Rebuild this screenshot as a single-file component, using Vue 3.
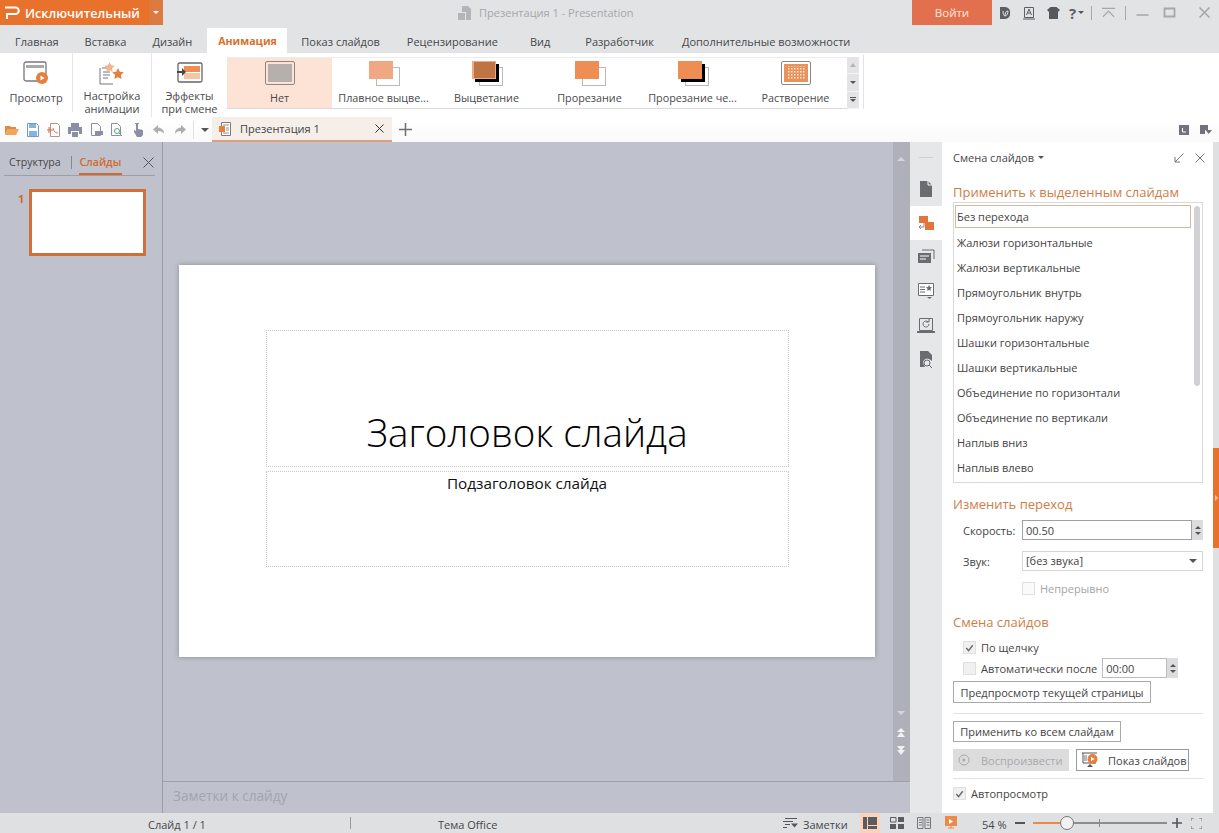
<template>
  <div class="app">
    <!-- шапка -->
    <header class="top">
      <div class="title-row">
        <div class="logo-btn">
          <svg width="16" height="14" viewBox="0 0 16 14"><path d="M1 1.500h10.500a3 3 0 0 1 0 6.500H3v5" fill="none" stroke="#fff" stroke-width="2"/></svg>
          <span>Исключительный</span>
        </div>
        <div class="logo-drop"><i class="tri white"></i></div>
        <div class="doc-title">
          <svg width="15" height="14" viewBox="0 0 15 14"><path d="M5 0h6l3 3v11H9V6H5zM1 7h7v7H1z" fill="#b4b5b8"/></svg>
          <span>Презентация 1 - Presentation</span>
        </div>
        <div class="login">Войти</div>
        <div class="win-icons">
          <svg class="w12" viewBox="0 0 12 14"><path d="M1 1h5a5 5 0 0 1 5 6 5 5 0 0 1-5 6H1z" fill="#5d5d62"/><path d="M4 5c0 3 1 5 2 5 2 0 3-3 3-5-2 0-3 2-3 5" fill="none" stroke="#e2e3e5"/></svg>
          <svg class="w12" viewBox="0 0 12 14"><path d="M1.500 1.500h9v10h-9z" fill="#e2e3e5" stroke="#5d5d62"/><path d="M0 13h12" stroke="#5d5d62"/><path d="M3.500 9L6 3l2.500 6M4.500 7h3" fill="none" stroke="#5d5d62"/></svg>
          <svg class="w13" viewBox="0 0 13 12"><path d="M3.500 0h6L13 3l-2 2v7H2V5L0 3z" fill="#57575c"/></svg>
          <span class="help">?</span><i class="tri dark small"></i>
          <b class="vsep"></b>
          <svg class="ctl collapse" viewBox="0 0 14 11"><path d="M0 1h14M1 10l6-6 6 6" fill="none" stroke="#a7a8ab" stroke-width="1.400"/></svg>
          <b class="vsep sep2"></b>
          <svg class="ctl minb" viewBox="0 0 12 11"><path d="M0 8h12" stroke="#a7a8ab" stroke-width="1.600"/></svg>
          <svg class="ctl maxb" viewBox="0 0 12 11"><path d="M1 1.500h10v8H1z" fill="none" stroke="#a7a8ab" stroke-width="1.800"/></svg>
          <svg class="ctl closeb" viewBox="0 0 11 11"><path d="M.5.500l10 10M10.500.500l-10 10" stroke="#a7a8ab" stroke-width="1.600"/></svg>
        </div>
      </div>
      <nav class="tabs">
        <span v-for="t in tabs" :key="t" class="tab" :class="{ active: t === 'Анимация' }">{{ t }}</span>
      </nav>
    </header>

    <!-- лента -->
    <section class="ribbon">
      <div class="big-btn b1">
        <svg width="26" height="24" viewBox="0 0 26 24">
          <rect x="1" y="1" width="22" height="19" rx="2" fill="#fff" stroke="#77777d" stroke-width="1.300"/>
          <rect x="3" y="4" width="18" height="3" fill="#a8a8ad"/>
          <circle cx="19" cy="17" r="6" fill="#e67e3c"/>
          <path d="M17.500 14.500l4 2.500-4 2.500z" fill="#fff"/>
        </svg>
        <span>Просмотр</span>
      </div>
      <div class="big-btn b2">
        <svg width="26" height="24" viewBox="0 0 26 24">
          <path d="M3 6h9M1 6v16h13" fill="none" stroke="#77777d"/>
          <path d="M4 10h7M4 13h7M4 16h5" stroke="#77777d"/>
          <path d="M15 0l1.800 3.700 4 .6-2.900 2.800.7 4-3.600-1.900-3.600 1.900.7-4L9.200 4.300l4-.6z" fill="#f2b48d" transform="translate(-3 0) scale(.9)"/>
          <path d="M19 6l1.800 3.700 4 .6-2.900 2.800.7 4L19 15.200l-3.600 1.900.7-4-2.900-2.800 4-.6z" fill="#e67e3c"/>
        </svg>
        <span>Настройка<br>анимации</span>
      </div>
      <div class="big-btn b3">
        <svg width="26" height="22" viewBox="0 0 26 22">
          <rect x="1" y="1" width="24" height="19" rx="1.500" fill="#fff" stroke="#66666b" stroke-width="1.300"/>
          <rect x="7" y="4" width="16" height="6" fill="#ee8e55"/>
          <rect x="7" y="11" width="16" height="6" fill="#f6c4a6"/>
          <path d="M0 9h5V6l4 4-4 4v-3H0z" fill="#47474c"/>
        </svg>
        <span>Эффекты<br>при смене</span>
      </div>
      <div class="gallery">
        <div v-for="(g, i) in gallery" :key="g.name" class="g-item" :class="{ sel: i === 0 }">
          <svg width="40" height="30" viewBox="0 0 40 30">
            <template v-if="g.kind === 'none'">
              <rect x="5.500" y="2.500" width="29" height="23" rx="1.500" fill="#fde3d6" stroke="#8a8684"/>
              <rect x="8" y="5" width="24" height="18" fill="#b5b0ae"/>
            </template>
            <template v-else-if="g.kind === 'dissolve'">
              <rect x="5.500" y="2.500" width="29" height="23" rx="1.500" fill="#fff" stroke="#8a8684"/>
              <rect x="8" y="5" width="24" height="18" fill="#e9935c"/>
              <rect x="11" y="7" width="18" height="14" fill="url(#dots)"/>
            </template>
            <template v-else>
              <rect x="12.500" y="8.500" width="23" height="18" fill="#fff" stroke="#b9b9b9"/>
              <rect v-if="g.shadow" x="8" y="5" width="24" height="18" fill="#000"/>
              <rect x="5" y="2" width="24" height="18" :fill="g.color"/>
              <rect v-if="g.inner" x="7" y="3" width="21" height="16" :fill="g.inner"/>
            </template>
            <defs>
              <pattern id="dots" width="3" height="3" patternUnits="userSpaceOnUse">
                <rect width="1.500" height="1.500" fill="#fbe6d8"/>
              </pattern>
            </defs>
          </svg>
          <span>{{ g.name }}</span>
        </div>
      </div>
      <div class="g-scroll">
        <div class="off"><i class="tri up pale"></i></div>
        <div><i class="tri dark small"></i></div>
        <div class="more"><b></b><i class="tri dark small"></i></div>
      </div>
      <div class="rib-end"></div>
    </section>

    <!-- панель быстрого доступа -->
    <section class="quick">
      <div class="q-icons">
        <svg v-for="q in quickIcons" :key="q.id" width="14" height="14" viewBox="0 0 14 14">
          <path v-for="(p, k) in q.paths" :key="k" :d="p.d" :fill="p.fill || 'none'" :stroke="p.stroke || 'none'"/>
        </svg>
        <b class="q-sep"></b>
        <i class="tri dark q-drop"></i>
      </div>
      <div class="doc-tab">
        <svg width="14" height="14" viewBox="0 0 14 14"><path d="M3.500.5h9v13h-9z" fill="#fff" stroke="#7c7c80"/><path d="M5 3h6M8 6h3M8 8h3M5 11h6" stroke="#8e8e92"/><path d="M1 4h6v6H1z" fill="#e67e3c"/></svg>
        <span>Презентация 1</span>
        <svg class="x" width="9" height="9" viewBox="0 0 9 9"><path d="M.5.500l8 8M8.500.500l-8 8" stroke="#333"/></svg>
      </div>
      <svg class="plus" width="13" height="13" viewBox="0 0 13 13"><path d="M6.500 0v13M0 6.500h13" stroke="#6d6d72" stroke-width="1.500"/></svg>
      <div class="q-right">
        <svg width="10" height="10" viewBox="0 0 10 10"><rect width="10" height="10" fill="#72727e"/><path d="M3.500 3v4H7" stroke="#fff" fill="none"/></svg>
        <svg width="12" height="10" viewBox="0 0 12 10"><path d="M0 0h8v5H5v4H0z" fill="#72727e"/><path d="M5.500 5H12L8.700 9z" fill="#72727e"/></svg>
      </div>
    </section>

    <main class="body">
      <!-- панель слайдов -->
      <aside class="left">
        <div class="left-tabs">
          <span class="lt">Структура</span>
          <b class="lt-sep"></b>
          <span class="lt on">Слайды</span>
          <svg width="11" height="11" viewBox="0 0 11 11"><path d="M.5.500l10 10M10.500.500l-10 10" stroke="#55565c"/></svg>
        </div>
        <div class="thumb-row">
          <span class="num">1</span>
          <div class="thumb"></div>
        </div>
      </aside>

      <!-- холст -->
      <div class="center">
        <div class="canvas-row">
          <div class="canvas">
            <div class="slide">
              <div class="ph title-ph">Заголовок слайда</div>
              <div class="ph sub-ph">Подзаголовок слайда</div>
            </div>
          </div>
          <div class="v-scroll">
            <i class="tri up pale2 s1"></i>
            <i class="tri pale2 s2"></i>
            <svg class="s3" width="8" height="9" viewBox="0 0 8 9"><path d="M4 0l4 4H0zM4 4l4 5H0z" fill="#f2f2f4"/></svg>
            <svg class="s4" width="8" height="9" viewBox="0 0 8 9"><path d="M0 0h8L4 5zM0 4h8L4 9z" fill="#f2f2f4"/></svg>
          </div>
        </div>
        <div class="notes">Заметки к слайду</div>
      </div>

      <!-- вертикальные значки -->
      <div class="side">
        <b class="grip"></b>
        <div v-for="s in sideIcons" :key="s.id" class="side-btn" :class="{ on: s.on }">
          <svg width="18" height="18" viewBox="0 0 18 18">
            <path v-for="(p, k) in s.paths" :key="k" :d="p.d" :fill="p.fill || 'none'" :stroke="p.stroke || 'none'"/>
          </svg>
        </div>
      </div>

      <!-- панель смены слайдов -->
      <aside class="task">
        <div class="task-head">
          <span>Смена слайдов</span><i class="tri dark small"></i>
          <svg class="pin" width="10" height="10" viewBox="0 0 10 10"><path d="M9.500.500L1 9M1 4v5h5" fill="none" stroke="#77777b"/></svg>
          <svg width="10" height="10" viewBox="0 0 10 10"><path d="M.5.500l9 9M9.500.500l-9 9" stroke="#77777b"/></svg>
        </div>
        <h3 class="sec first">Применить к выделенным слайдам</h3>
        <div class="listbox">
          <div v-for="(row, i) in transitions" :key="row" class="row" :class="{ sel: i === 0 }">{{ row }}</div>
          <b class="list-thumb"></b>
        </div>

        <h3 class="sec change">Изменить переход</h3>
        <div class="field speed">
          <label>Скорость:</label>
          <div class="input">00.50</div>
          <div class="spin"><i class="tri up dark small"></i><i class="tri dark small"></i></div>
        </div>
        <div class="field sound">
          <label>Звук:</label>
          <div class="input select">[без звука]<i class="tri dark"></i></div>
        </div>
        <div class="check cont"><span class="box off"></span><span class="muted">Непрерывно</span></div>

        <h3 class="sec advance">Смена слайдов</h3>
        <div class="check click">
          <span class="box"><svg width="12" height="12" viewBox="0 0 12 12"><path d="M2.500 6l2.500 3 4.500-6" fill="none" stroke="#666" stroke-width="1.500"/></svg></span>
          <span>По щелчку</span>
        </div>
        <div class="check auto">
          <span class="box"></span><span>Автоматически после</span>
          <div class="input time">00:00</div>
          <div class="spin"><i class="tri up dark small"></i><i class="tri dark small"></i></div>
        </div>
        <button class="btn preview">Предпросмотр текущей страницы</button>
        <hr class="line l1">
        <button class="btn all">Применить ко всем слайдам</button>
        <div class="btn-row">
          <button class="btn play">
            <svg width="12" height="12" viewBox="0 0 12 12"><circle cx="6" cy="6" r="5" fill="none" stroke="#a9a9a9"/><path d="M4.800 3.800l3 2.200-3 2.200z" fill="#a9a9a9"/></svg>
            Воспроизвести
          </button>
          <button class="btn show">
            <svg width="18" height="17" viewBox="0 0 18 17"><path d="M1 1h15M2 1v10h13" fill="none" stroke="#55555a"/><path d="M3 4h3M3 6h3M3 8h3" stroke="#77777b"/><circle cx="11.500" cy="7" r="5" fill="#e67e3c"/><path d="M10 4.800l3.500 2.200L10 9.200z" fill="#fff"/><path d="M6 15h6L9 12z" fill="#55555a"/></svg>
            Показ слайдов
          </button>
        </div>
        <hr class="line l2">
        <div class="check autop">
          <span class="box"><svg width="12" height="12" viewBox="0 0 12 12"><path d="M2.500 6l2.500 3 4.500-6" fill="none" stroke="#666" stroke-width="1.500"/></svg></span>
          <span>Автопросмотр</span>
        </div>
      </aside>

      <div class="edge"><div class="handle"><i class="tri-r"></i></div></div>
    </main>

    <!-- строка состояния -->
    <footer class="status">
      <span class="st-slide">Слайд 1 / 1</span>
      <b class="st-sep"></b>
      <span class="st-theme">Тема Office</span>
      <svg class="st-notes" width="15" height="10" viewBox="0 0 15 10"><path d="M2 .5h12M0 3.500h10M2 6.500h5M0 9.500h4" stroke="#55555a"/><path d="M8 5.500h7L11.500 9.500z" fill="#55555a"/></svg>
      <span class="st-nt">Заметки</span>
      <div class="view on"><svg width="14" height="12" viewBox="0 0 14 12"><path d="M0 0h4v12H0zM5 0h9v8H5zM5 9h9v3H5z" fill="#5c5c60"/></svg></div>
      <div class="view"><svg width="14" height="12" viewBox="0 0 14 12"><path d="M.5.500h5.500v4.500H.5z" fill="none" stroke="#5c5c60"/><path d="M8 0h6v5H8zM0 7h6v5H0zM8 7h6v5H8z" fill="#5c5c60"/></svg></div>
      <div class="view"><svg width="14" height="12" viewBox="0 0 14 12"><path d="M.5.500h5.500v11H.5zM8 .500h5.500v11H8zM2 3h3M2 5.500h3M2 8h3M9.500 3h3M9.500 5.500h3M9.500 8h3" fill="none" stroke="#77777b"/></svg></div>
      <div class="view"><svg width="14" height="14" viewBox="0 0 14 14"><path d="M1 0h12v10H1z" fill="#ec8a4a"/><path d="M5 3l4 2.500L5 8z" fill="#fff"/><path d="M4 12h6M7 10v2" stroke="#ec8a4a"/></svg></div>
      <span class="zoom-val">54 %</span>
      <svg class="minus" width="10" height="2" viewBox="0 0 10 2"><path d="M0 1h10" stroke="#55555a" stroke-width="2"/></svg>
      <div class="slider"><b class="fill"></b><b class="tick"></b><b class="knob"></b></div>
      <svg class="zplus" width="10" height="10" viewBox="0 0 10 10"><path d="M5 0v10M0 5h10" stroke="#55555a" stroke-width="1.600"/></svg>
      <svg class="fit" width="11" height="11" viewBox="0 0 11 11"><path d="M0 3V0h3M8 0h3v3M11 8v3H8M3 11H0V8" fill="none" stroke="#77777b"/></svg>
    </footer>
  </div>
</template>

<script setup>
const tabs = ['Главная', 'Вставка', 'Дизайн', 'Анимация', 'Показ слайдов', 'Рецензирование', 'Вид', 'Разработчик', 'Дополнительные возможности']

const gallery = [
  { name: 'Нет', kind: 'none' },
  { name: 'Плавное выцве...', kind: 'plain', color: '#f0a883' },
  { name: 'Выцветание', kind: 'plain', color: '#f0a883', inner: '#bf7443', shadow: true },
  { name: 'Прорезание', kind: 'plain', color: '#ee8e55' },
  { name: 'Прорезание че...', kind: 'plain', color: '#ee8e55', shadow: true },
  { name: 'Растворение', kind: 'dissolve' }
]

const transitions = [
  'Без перехода', 'Жалюзи горизонтальные', 'Жалюзи вертикальные', 'Прямоугольник внутрь',
  'Прямоугольник наружу', 'Шашки горизонтальные', 'Шашки вертикальные',
  'Объединение по горизонтали', 'Объединение по вертикали', 'Наплыв вниз', 'Наплыв влево'
]

const g = '#8c8da6'
const quickIcons = [
  { id: 'open', paths: [{ d: 'M0 3h5l1 1h5v2H3L0 12z', fill: '#e0893f' }, { d: 'M3 6h11l-3 6H0z', fill: '#f0a65c' }] },
  { id: 'save', paths: [{ d: 'M1.500.5h9l2 2v11h-11z', fill: '#fff', stroke: '#6b9bd0' }, { d: 'M3 1h7v4H3zM3 8h8v5H3z', fill: '#8ab2dd' }] },
  { id: 'pdf', paths: [{ d: 'M3.500.5h7l2 2v11h-9z', fill: '#fff', stroke: '#a89a92' }, { d: 'M2 4v6M0 7h6', stroke: '#d9684a' }, { d: 'M6 5c1 4 3 5 5 5', stroke: '#d9684a' }] },
  { id: 'print', paths: [{ d: 'M3 0h8v4H3zM0 4h14v7h-3V8H3v3H0zM4 9h6v5H4z', fill: g }] },
  { id: 'pv', paths: [{ d: 'M2.500.5h6l3 3v9h-9z', fill: '#fff', stroke: g }, { d: 'M6 8h8v4H6z', fill: g }] },
  { id: 'find', paths: [{ d: 'M1.500.5h6l3 3v9h-9z', fill: '#fff', stroke: g }, { d: 'M8 9l4 4', stroke: '#5da56b' }, { d: 'M9.500 8a2.500 2.500 0 1 1-5 0 2.500 2.500 0 0 1 5 0z', fill: '#fff', stroke: '#5da56b' }] },
  { id: 'hand', paths: [{ d: 'M5 0h2v6l5 1v5l-2 2H6L3 9V7l2 1z', fill: g }, { d: 'M5 1a2 2 0 1 1 2 0', stroke: '#6b9bd0' }] },
  { id: 'undo', paths: [{ d: 'M6 2L1 6.500 6 11V8c3 0 5 1 6 3 0-4-2-6-6-6.500z', fill: '#aeaeb2' }] },
  { id: 'redo', paths: [{ d: 'M8 2l5 4.500L8 11V8c-3 0-5 1-6 3 0-4 2-6 6-6.500z', fill: '#aeaeb2' }] }
]

const c = '#6c6c70'
const sideIcons = [
  { id: 'page', paths: [{ d: 'M3 1h8l4 4v12H3z', fill: c }, { d: 'M11 1v4h4', stroke: '#fff' }] },
  { id: 'trans', on: true, paths: [{ d: 'M2 2h9v7H2z', fill: '#e2763a' }, { d: 'M8 8h9v8H8z', fill: '#e2763a' }, { d: 'M7 8v5H2M4 11l-2 2 2 2', stroke: '#8a8a8e' }] },
  { id: 'anim', paths: [{ d: 'M5 2h12v9', stroke: c }, { d: 'M1 5h13v10H1z', fill: c }, { d: 'M3 8h9M3 11h6', stroke: '#fff' }] },
  { id: 'custom', paths: [{ d: 'M1.500 1.500h15v12h-15z', stroke: c, fill: '#fff' }, { d: 'M3 5h5M3 7.500h5M3 10h5', stroke: c }, { d: 'M12 3l1 2 2 .3-1.500 1.500.4 2L12 8l-1.900.8.4-2L9 5.300l2-.3z', fill: c }, { d: 'M10 15h5l-2.500 2z', fill: c }] },
  { id: 'backup', paths: [{ d: 'M2.500 2.500h13v12h-13z', stroke: c }, { d: 'M0 15h18v2H0z', fill: c }, { d: 'M12 8a3 3 0 1 1-1-2.200M12 3v3H9', stroke: c }] },
  { id: 'search', paths: [{ d: 'M3 1h8l4 4v6l-3-2a4 4 0 0 0-5 6l1 2H3z', fill: c }, { d: 'M7 13a3 3 0 1 0 6 0 3 3 0 0 0-6 0M12 15l3 3', stroke: c }] }
]
</script>

<style scoped>
.app {
  width: 1219px;
  height: 833px;
  overflow: hidden;
  display: flex;
  flex-direction: column;
  background: #bfc2cc;
  font-family: "Open Sans", "Noto Sans", sans-serif;
  font-size: 11px;
  color: #3d3d40;
}

.tri {
  display: inline-block;
  width: 0;
  height: 0;
  border-left: 4px solid transparent;
  border-right: 4px solid transparent;
  border-top: 4px solid #555;
}
.tri.small { border-left-width: 3px; border-right-width: 3px; border-top-width: 3px; }
.tri.up { border-top: 0; border-bottom: 4px solid #555; }
.tri.up.small { border-bottom-width: 3px; }
.tri.white { border-top-color: #fff; border-left-width: 3px; border-right-width: 3px; border-top-width: 3px; }
.tri.up.pale { border-bottom-color: #b5b5b8; border-left-width: 3px; border-right-width: 3px; }
.tri.pale2 { border-top-color: #d5d6dc; }
.tri.up.pale2 { border-bottom-color: #d5d6dc; }

/* шапка */
.top { height: 53px; background: #e2e3e5; flex: none; }
.title-row { height: 25px; display: flex; }
.logo-btn {
  width: 149px;
  background: #e8722c;
  color: #fff;
  display: flex;
  align-items: center;
  gap: 5px;
  padding-left: 4px;
  font-size: 12.700px;
  font-weight: 600;
  box-sizing: border-box;
}
.logo-drop {
  width: 14px;
  background: #dd7a3f;
  display: flex;
  align-items: center;
  justify-content: center;
}
.doc-title {
  margin-left: 294px;
  width: 455px;
  display: flex;
  align-items: center;
  gap: 7px;
  color: #a5a6a9;
}
.login {
  width: 80px;
  background: #e2704f;
  color: #fde9de;
  font-size: 11.500px;
  display: flex;
  align-items: center;
  justify-content: center;
}
.win-icons { flex: 1; display: flex; align-items: center; padding-left: 7px; }
.w12 { width: 12px; height: 14px; margin-right: 12px; }
.w13 { width: 13px; height: 12px; margin-right: 9px; }
.help { font-size: 15px; font-weight: 700; color: #5d5d62; margin-right: 2px; }
.vsep { width: 1px; height: 14px; background: #a7a8ab; margin-left: 7px; }
.sep2 { margin-left: 10px; }
.ctl { width: 13px; height: 11px; }
.collapse { margin-left: 10px; }
.minb { margin-left: 10px; }
.maxb { margin-left: 14px; }
.closeb { margin-left: 22px; }

.tabs { height: 28px; display: flex; align-items: flex-end; padding-left: 1px; }
.tab {
  height: 25px;
  line-height: 27px;
  padding: 0 14px;
  margin-right: -2px;
  color: #47474a;
  white-space: nowrap;
}
.tab.active {
  box-sizing: border-box;
  width: 80px;
  background: #fff;
  color: #d9702c;
  font-weight: 700;
  font-size: 10.600px;
  padding: 0 0 0 11px;
  margin: 0;
}
.tab:nth-child(3) { margin-right: 1px; }
.tab:nth-child(5) { margin-right: -1px; }
.tab:nth-child(6) { margin-right: 4px; }
.tab:nth-child(7) { margin-right: 7px; }
.tab:nth-child(8) { margin-right: 0; }

/* лента */
.ribbon { height: 64px; background: #fff; display: flex; flex: none; overflow: hidden; }
.big-btn {
  flex: none;
  box-sizing: border-box;
  display: flex;
  flex-direction: column;
  align-items: center;
  line-height: 13px;
  text-align: center;
  height: 59px;
  padding-top: 8px;
  color: #4a4a4d;
}
.b1, .b2 { border-right: 1px solid #e6e6e8; }
.b2, .b3 { height: 64px; }
.big-btn svg { height: 24px; margin-bottom: 5px; flex: none; }
.b1 { width: 73px; }
.b1 span { margin-top: 1px; }
.b2 { width: 79px; padding-top: 9px; }
.b2 svg { margin-bottom: 3px; }
.b3 { width: 75px; }
.b3 svg { margin-bottom: 4px; }
.gallery {
  width: 620px;
  height: 52px;
  margin-top: 4px;
  display: flex;
  border-top: 1px solid #ececee;
  border-bottom: 1px solid #d9d9db;
  box-sizing: border-box;
  flex: none;
}
.g-item {
  width: 103px;
  display: flex;
  flex-direction: column;
  align-items: center;
  color: #4a4a4d;
  padding-top: 1px;
  flex: none;
}
.g-item span { margin-top: 1px; white-space: nowrap; font-size: 10.800px; }
.g-item.sel { background: #fde3d6; width: 105px; }
.g-scroll { width: 12px; margin-top: 4px; height: 52px; background: #e4e4e6; display: flex; flex-direction: column; flex: none; }
.g-scroll div { flex: 1; display: flex; flex-direction: column; align-items: center; justify-content: center; border-bottom: 1px solid #f4f4f4; }
.g-scroll .more b { width: 6px; height: 1px; background: #555; margin-bottom: 1px; }
.rib-end { width: 1px; height: 54px; background: #e3e3e5; margin: 2px 0 0 4px; }

/* быстрый доступ */
.quick { height: 25px; background: linear-gradient(#fff, #fafafa); display: flex; align-items: center; flex: none; }
.q-icons { width: 212px; display: flex; align-items: center; padding-left: 5px; gap: 7px; box-sizing: border-box; flex: none; }
.q-sep { width: 1px; height: 18px; background: #e0e0e2; margin-left: -1px; }
.doc-tab {
  width: 180px;
  height: 25px;
  box-sizing: border-box;
  background: #f6eee9;
  border-bottom: 2px solid #dc9f7e;
  display: flex;
  align-items: center;
  padding: 0 8px 0 6px;
  color: #444;
  flex: none;
}
.doc-tab span { margin-left: 8px; flex: 1; }
.plus { margin-left: 7px; }
.q-right { margin-left: auto; display: flex; gap: 11px; align-items: center; padding-right: 7px; }

/* основная часть */
.body { flex: 1; display: flex; min-height: 0; }
.left { width: 163px; box-sizing: border-box; border-right: 1px solid #9c9ea6; flex: none; }
.left-tabs {
  margin: 13px 7px 0 4px;
  height: 20px;
  display: flex;
  align-items: flex-start;
  border-bottom: 1px solid #9c9ea6;
  font-size: 10.600px;
  padding-left: 5px;
}
.lt-sep { width: 1px; height: 13px; background: #888; margin: 1px 8px 0 10px; }
.lt { line-height: 14px; color: #47474a; }
.lt.on { color: #d2692d; font-weight: 600; border-bottom: 2px solid #d2692d; height: 18px; padding: 0 1px; margin-left: -1px; }
.left-tabs svg { margin: 2px 1px 0 auto; }
.thumb-row { display: flex; margin-top: 13px; padding-left: 18px; }
.num { width: 11px; color: #d2692d; font-weight: 700; line-height: 20px; }
.thumb { width: 117px; height: 67px; box-sizing: border-box; background: #fff; border: 3px solid #cf6f3a; }

.center { width: 747px; flex: none; display: flex; flex-direction: column; }
.canvas-row { flex: 1; display: flex; border-bottom: 1px solid #9fa0a8; }
.canvas { width: 730px; flex: none; padding: 123px 0 0 16px; box-sizing: border-box; }
.slide {
  width: 696px;
  height: 392px;
  background: #fff;
  box-shadow: 0 0 5px rgba(70, 70, 80, 0.45);
  box-sizing: border-box;
  padding-top: 65px;
  display: flex;
  flex-direction: column;
  align-items: center;
  gap: 4px;
}
.ph { width: 523px; box-sizing: border-box; border: 1px dotted #c8c8c8; text-align: center; color: #111; }
.title-ph { height: 137px; font-size: 38.600px; font-weight: 300; line-height: 46px; padding-top: 78px; color: #000; }
.sub-ph { height: 96px; font-size: 15.300px; line-height: 22px; }
.v-scroll { width: 17px; background: #afb1ba; position: relative; flex: none; }
.v-scroll i, .v-scroll svg { position: absolute; left: 4px; }
.s1 { top: 15px; }
.s2 { top: 569px; }
.s3 { top: 586px; }
.s4 { top: 604px; }
.notes { height: 31px; line-height: 27px; padding-left: 10px; font-size: 13.600px; color: #a2a4ae; }

.side { width: 32px; background: #e6e7e9; flex: none; padding-top: 15px; }
.grip { display: block; width: 14px; height: 1px; background: #cfd0d2; margin: 0 auto 14px; }
.side-btn { height: 34px; display: flex; align-items: center; justify-content: center; }
.side-btn.on { background: #fff; }

.task { width: 271px; background: #fff; flex: none; padding: 0 8px 0 11px; box-sizing: border-box; color: #444; }
.task-head { display: flex; align-items: center; height: 15px; margin-top: 8px; gap: 4px; color: #47474a; }
.task-head .pin { margin-left: auto; margin-right: 7px; }
.sec { margin: 0; font-size: 13px; font-weight: 400; color: #cf7d48; line-height: 18px; }
.sec.first { margin-top: 18px; }
.listbox { width: 250px; height: 281px; margin-top: 1px; border: 1px solid #d9d9dc; box-sizing: border-box; position: relative; padding-top: 2px; overflow: hidden; }
.row { height: 25px; line-height: 25px; padding-left: 3px; white-space: nowrap; }
.row.sel { width: 236px; height: 23px; line-height: 22px; margin: 0 0 2px 1px; padding-left: 1px; border: 1px solid #d9b79c; box-sizing: border-box; }
.list-thumb { position: absolute; right: 2px; top: 3px; width: 6px; height: 180px; background: #d2d2d4; border-radius: 3px; }
.sec.change { margin-top: 12px; }
.field { display: flex; align-items: center; padding-left: 10px; }
.field label { width: 59px; flex: none; }
.speed { margin-top: 7px; }
.sound { margin-top: 11px; }
.input { box-sizing: border-box; height: 20px; line-height: 20px; border: 1px solid #d5d5d8; padding-left: 3px; color: #444; }
.speed .input { width: 170px; border-color: #a0a0a4; }
.select { width: 181px; display: flex; align-items: center; justify-content: space-between; padding-right: 5px; }
.spin { width: 11px; height: 20px; background: #dcdcde; display: flex; flex-direction: column; align-items: center; justify-content: center; gap: 3px; flex: none; }
.check { display: flex; align-items: center; }
.box { width: 11px; height: 11px; flex: none; background: #f0f0f1; border: 1px solid #e0e0e2; display: flex; }
.box.off { background: #fafafa; }
.muted { color: #a5a5a8; }
.cont { margin-top: 10px; padding-left: 69px; gap: 5px; }
.sec.advance { margin-top: 17px; }
.click { margin-top: 9px; padding-left: 10px; gap: 5px; }
.auto { margin-top: 3px; padding-left: 10px; gap: 5px; height: 20px; }
.auto .time { width: 65px; border-color: #bcbcbf; }
.auto .spin { margin-left: -5px; }
.btn {
  display: block;
  font: inherit;
  color: #444;
  background: #fff;
  border: 1px solid #a9a9ac;
  padding: 0;
  box-sizing: border-box;
}
.preview { width: 198px; height: 22px; margin-top: 3px; }
.line { border: 0; height: 1px; background: #e2e2e4; margin: 0; width: 250px; }
.l1 { margin-top: 10px; }
.all { width: 168px; height: 21px; margin-top: 7px; }
.btn-row { display: flex; gap: 7px; margin-top: 7px; }
.play { width: 116px; height: 22px; background: #dcdcdd; border: 0; color: #a9a9ac; display: flex; align-items: center; gap: 11px; padding-left: 5px; }
.show { width: 113px; height: 22px; display: flex; align-items: center; gap: 9px; padding-left: 4px; border-color: #9a9a9d; }
.l2 { margin-top: 7px; }
.autop { margin-top: 7px; gap: 5px; }

.edge { flex: 1; background: #dfe0e2; position: relative; }
.handle { position: absolute; top: 306px; left: 0; right: 0; height: 100px; background: #e8722c; display: flex; align-items: center; justify-content: center; }
.tri-r { width: 0; height: 0; border-top: 3px solid transparent; border-bottom: 3px solid transparent; border-left: 3px solid #f7c9a8; }

/* статус */
.status { height: 20px; background: #dfe0e2; display: flex; align-items: center; flex: none; color: #47474a; }
.status span { margin-top: 2px; }
.st-slide { margin-left: 148px; width: 202px; }
.st-sep { width: 1px; height: 12px; background: #9a9a9d; }
.st-theme { margin-left: 87px; width: 344px; }
.st-notes { margin-left: 1px; }
.st-nt { margin-left: 5px; width: 50px; }
.view { width: 20px; height: 20px; display: flex; align-items: center; justify-content: center; margin-right: 7px; flex: none; }
.view.on { background: #fad3bd; margin-left: 7px; }
.zoom-val { margin-left: 14px; width: 33px; }
.minus { margin-right: 8px; }
.slider { width: 134px; height: 2px; background: #8d8d90; position: relative; }
.fill { position: absolute; left: 0; top: 0; height: 2px; width: 28px; background: #ec8a4a; }
.tick { position: absolute; left: 66px; top: -3px; width: 1px; height: 8px; background: #8d8d90; }
.knob { position: absolute; left: 27px; top: -6px; width: 12px; height: 12px; border-radius: 50%; background: #f1f1f2; border: 1px solid #77777b; }
.zplus { margin-left: 5px; }
.fit { margin-left: 9px; }
</style>
